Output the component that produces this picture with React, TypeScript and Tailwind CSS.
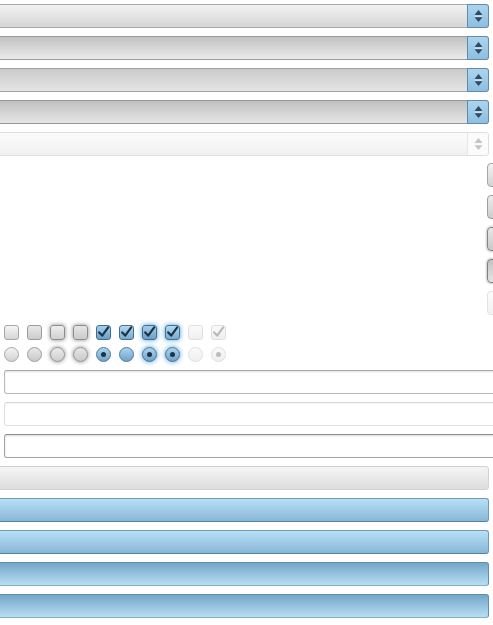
import React from "react";

// Spinner arrows used inside the select boxes
const SpinArrows = ({ color = "#2d4b63", line = "#e3f1fa" }: { color?: string; line?: string }) => (
  <svg width="9" height="14" viewBox="0 0 9 14">
    <polygon points="0.5,6 4.5,1 8.5,6" fill={color} />
    <rect x="0.5" y="6.6" width="8" height="1" fill={line} />
    <polygon points="0.5,8.2 8.5,8.2 4.5,13" fill={color} />
  </svg>
);

const selects = [
  { body: "bg-gradient-to-b from-[#f2f2f2] to-[#d6d6d6] border-[#a9a9a9]", disabled: false },
  { body: "bg-gradient-to-b from-[#c2c2c2] to-[#ebebeb] border-[#9a9a9a]", disabled: false },
  { body: "bg-gradient-to-b from-[#cbcbcb] to-[#e4e4e4] border-[#a2a2a2]", disabled: false },
  { body: "bg-gradient-to-b from-[#c0c0c0] to-[#e6e6e6] border-[#959595]", disabled: false },
  { body: "bg-gradient-to-b from-[#fbfbfb] to-[#f1f1f1] border-[#dedede]", disabled: true },
];

const buttons = [
  "bg-gradient-to-b from-[#f3f3f3] to-[#d3d3d3] border-[#a5a5a5]",
  "bg-gradient-to-b from-[#ececec] to-[#cdcdcd] border-[#9e9e9e]",
  "bg-gradient-to-b from-[#e8e8e8] to-[#c8c8c8] border-[#858585] shadow-[0_0_3px_#9a9a9a]",
  "bg-gradient-to-b from-[#c4c4c4] to-[#e4e4e4] border-[#7f7f7f] shadow-[0_0_3px_#9a9a9a]",
  "bg-gradient-to-b from-[#fbfbfb] to-[#f2f2f2] border-[#e2e2e2]",
];

const CheckMark = ({ color }: { color: string }) => (
  <svg width="15" height="15" viewBox="0 0 15 15" className="absolute -top-px -left-px">
    <path d="M3.2 7.4 L6.2 10.6 L12.2 2.4" fill="none" stroke={color} strokeWidth="2.2" strokeLinecap="round" strokeLinejoin="round" />
  </svg>
);

const checkboxes = [
  { cls: "bg-gradient-to-b from-[#f5f5f5] to-[#d6d6d6] border-[#a6a6a6]", check: "" },
  { cls: "bg-gradient-to-b from-[#e9e9e9] to-[#cbcbcb] border-[#9b9b9b]", check: "" },
  { cls: "bg-gradient-to-b from-[#eeeeee] to-[#d0d0d0] border-[#8d8d8d] shadow-[0_0_4px_#8a8a8a]", check: "" },
  { cls: "bg-gradient-to-b from-[#e6e6e6] to-[#cbcbcb] border-[#8d8d8d] shadow-[0_0_4px_#8a8a8a]", check: "" },
  { cls: "bg-gradient-to-b from-[#a6d0ec] to-[#6b9fc5] border-[#3f6d8f]", check: "#1b3347" },
  { cls: "bg-gradient-to-b from-[#b2daf2] to-[#78aacd] border-[#446f90]", check: "#1b3347" },
  { cls: "bg-gradient-to-b from-[#a6d0ec] to-[#6b9fc5] border-[#3f6d8f] shadow-[0_0_5px_#4d9fd8]", check: "#1b3347" },
  { cls: "bg-gradient-to-b from-[#b2daf2] to-[#78aacd] border-[#446f90] shadow-[0_0_5px_#4d9fd8]", check: "#1b3347" },
  { cls: "bg-gradient-to-b from-[#fafafa] to-[#efefef] border-[#dfdfdf]", check: "" },
  { cls: "bg-gradient-to-b from-[#fafafa] to-[#efefef] border-[#dfdfdf]", check: "#b9b9b9" },
];

const radios = [
  { cls: "bg-gradient-to-b from-[#f3f3f3] to-[#d2d2d2] border-[#a6a6a6]", dot: "" },
  { cls: "bg-gradient-to-b from-[#e8e8e8] to-[#c9c9c9] border-[#9b9b9b]", dot: "" },
  { cls: "bg-gradient-to-b from-[#ececec] to-[#cecece] border-[#8d8d8d] shadow-[0_0_4px_#8a8a8a]", dot: "" },
  { cls: "bg-gradient-to-b from-[#e6e6e6] to-[#c9c9c9] border-[#8d8d8d] shadow-[0_0_4px_#8a8a8a]", dot: "" },
  { cls: "bg-gradient-to-b from-[#acd5ef] to-[#6fa3c8] border-[#4a7899]", dot: "bg-[#1c3347]" },
  { cls: "bg-gradient-to-b from-[#acd5ef] to-[#6fa3c8] border-[#4a7899]", dot: "" },
  { cls: "bg-gradient-to-b from-[#acd5ef] to-[#6fa3c8] border-[#3f6d8f] shadow-[0_0_5px_#4d9fd8]", dot: "bg-[#1c3347]" },
  { cls: "bg-gradient-to-b from-[#acd5ef] to-[#6fa3c8] border-[#3f6d8f] shadow-[0_0_5px_#4d9fd8]", dot: "bg-[#1c3347]" },
  { cls: "bg-gradient-to-b from-[#fafafa] to-[#efefef] border-[#dfdfdf]", dot: "" },
  { cls: "bg-gradient-to-b from-[#fafafa] to-[#efefef] border-[#dfdfdf]", dot: "bg-[#bdbdbd]" },
];

const inputs = [
  "border-[#b9b9b9] border-t-[#a8a8a8] shadow-[inset_0_1px_2px_rgba(0,0,0,0.12)]",
  "border-[#e0e0e0] border-t-[#d6d6d6] shadow-[inset_0_1px_2px_rgba(0,0,0,0.05)]",
  "border-[#a3a3a3] border-t-[#8e8e8e] shadow-[inset_0_1px_2px_rgba(0,0,0,0.15)]",
];

const bars = [
  "bg-gradient-to-b from-[#f5f5f5] to-[#dddddd] border-[#d2d2d2]",
  "bg-gradient-to-b from-[#b9e0f6] to-[#87b7d7] border-[#6b9cbd] border-b-[#55829f]",
  "bg-gradient-to-b from-[#b9e0f6] to-[#87b7d7] border-[#6b9cbd] border-b-[#55829f]",
  "bg-gradient-to-b from-[#74a7c8] to-[#b7def4] border-[#5f8fb0] border-b-[#7fb0cf]",
  "bg-gradient-to-b from-[#74a7c8] to-[#b7def4] border-[#5f8fb0] border-b-[#7fb0cf]",
];

export default function App() {
  return (
    <div className="w-[493px] h-[625px] overflow-hidden bg-white font-['Liberation_Sans',sans-serif]">
      <div className="flex flex-col pt-1">
        {/* Select boxes */}
        <div className="-ml-3 pr-1 flex flex-col gap-2">
          {selects.map((s, i) => (
            <div key={i} className={`h-6 flex justify-end rounded-[3px] border ${s.body}`}>
              {s.disabled ? (
                <div className="w-[21px] flex items-center justify-center border-l border-[#e6e6e6] bg-[#fbfbfb] rounded-r-[3px]">
                  <SpinArrows color="#c4c4c4" line="#fbfbfb" />
                </div>
              ) : (
                <div className="w-[22px] -my-px -mr-px flex items-center justify-center border border-[#5d8cae] rounded-r-[3px] bg-gradient-to-b from-[#add4ee] to-[#8dbfe0]">
                  <SpinArrows />
                </div>
              )}
            </div>
          ))}
        </div>

        {/* Buttons, mostly cut off on the right */}
        <div className="mt-[7px] pl-[487px] flex flex-col gap-2">
          {buttons.map((b, i) => (
            <div key={i} className={`w-16 h-6 shrink-0 rounded-[4px] border ${b}`} />
          ))}
        </div>

        {/* Checkboxes */}
        <div className="mt-[10px] pl-1 flex gap-2">
          {checkboxes.map((c, i) => (
            <div key={i} className={`relative w-[15px] h-[15px] rounded-[3px] border ${c.cls}`}>
              {c.check && <CheckMark color={c.check} />}
            </div>
          ))}
        </div>

        {/* Radios */}
        <div className="mt-[7px] pl-1 flex gap-2">
          {radios.map((r, i) => (
            <div key={i} className={`w-[15px] h-[15px] rounded-full border flex items-center justify-center ${r.cls}`}>
              {r.dot && <div className={`w-[5px] h-[5px] rounded-full ${r.dot}`} />}
            </div>
          ))}
        </div>

        {/* Text inputs */}
        <div className="mt-2 pl-1 flex flex-col gap-2">
          {inputs.map((c, i) => (
            <div key={i} className={`w-[520px] h-6 rounded-[3px] border bg-white ${c}`} />
          ))}
        </div>

        {/* Bars */}
        <div className="mt-2 -ml-3 pr-1 flex flex-col gap-2">
          {bars.map((c, i) => (
            <div key={i} className={`h-6 rounded-[3px] border ${c}`} />
          ))}
        </div>
      </div>
    </div>
  );
}
